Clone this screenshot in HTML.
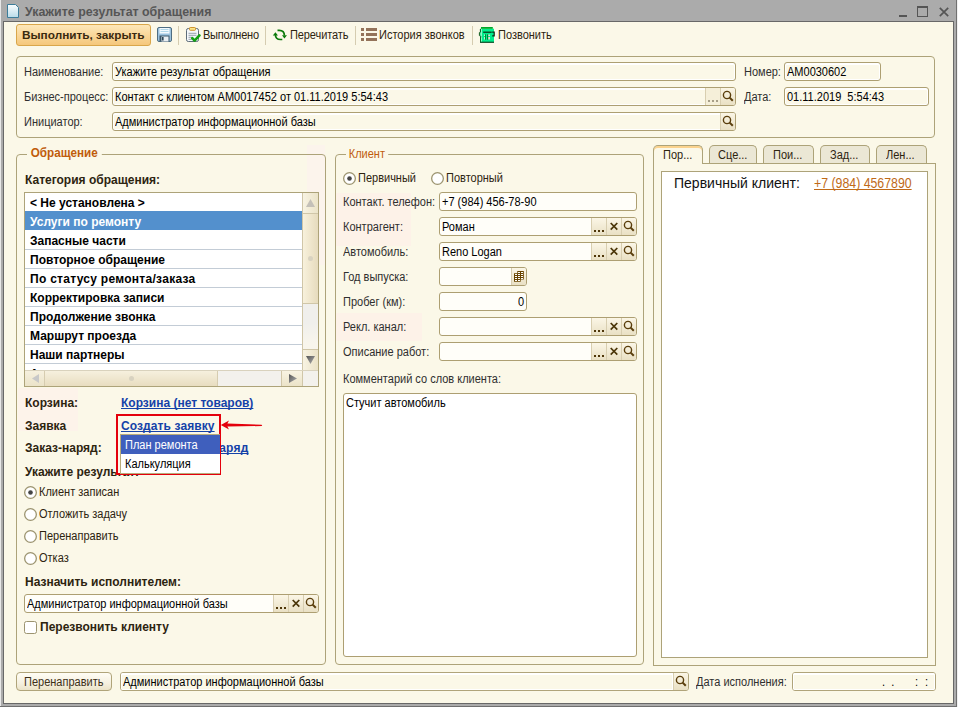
<!DOCTYPE html>
<html><head><meta charset="utf-8">
<style>
*{box-sizing:border-box;margin:0;padding:0}
html,body{width:958px;height:707px;overflow:hidden}
body{position:relative;background:#ababab;font-family:"Liberation Sans",sans-serif;font-size:11px;color:#2b2b2b}
.a{position:absolute}
.t{position:absolute;white-space:nowrap;line-height:13px;font-size:12px;transform:scaleX(.917);transform-origin:0 0}
.t.b{transform:none}
.content{position:absolute;left:4px;top:22px;width:949px;height:681px;background:#fbf8e8}
.grp{position:absolute;border:1px solid #ada379;border-radius:4px}
.inp{position:absolute;height:19px;border:1px solid #ad9f72;border-radius:3px;background:#fffef9;overflow:hidden}
.inp .v{position:absolute;left:2px;top:3px;white-space:nowrap;color:#000;line-height:13px;font-size:12px;transform:scaleX(.917);transform-origin:0 0}
.ro{background:#fbf8e8;box-shadow:inset 0 0 0 1px #fff,inset 0 1px 0 1px #fff}
.btn{position:absolute;top:0;bottom:0;width:15px;border-left:1px solid #d8ceb0;background:linear-gradient(#fbf6e6,#e9e0c4)}
.lbl{position:absolute;white-space:nowrap;color:#2f2f2f;line-height:13px;font-size:12px;transform:scaleX(.917);transform-origin:0 0}
.b{font-weight:bold}
.gt{position:absolute;background:#fbf8e8;padding:0 3px;color:#c05c0c;white-space:nowrap;line-height:13px;font-size:12px;transform:scaleX(.917);transform-origin:0 0}
.gt.b{transform:none}
.sep{position:absolute;top:28px;width:1px;height:16px;background:#d5ccb0}
</style></head><body>
<svg width="0" height="0" style="position:absolute"><defs><linearGradient id="ga" x1="0" y1="0" x2="1" y2="1"><stop offset="0" stop-color="#555"/><stop offset="1" stop-color="#b0b0b0"/></linearGradient><linearGradient id="gb" x1="0" y1="0" x2="1" y2="1"><stop offset="0" stop-color="#555"/><stop offset="1" stop-color="#b0b0b0"/></linearGradient></defs></svg>
<!-- window frame -->
<div class="a" style="left:0;top:0;width:1px;height:707px;background:#e8e8e8"></div>
<div class="a" style="left:3px;top:21px;width:951px;height:683px;background:#686868"></div>
<div class="a" style="left:956px;top:0;width:1px;height:707px;background:#707070"></div>
<div class="a" style="left:957px;top:0;width:1px;height:707px;background:#f0f0f0"></div>
<div class="a" style="left:0;top:706px;width:957px;height:1px;background:#707070"></div>
<div class="content"></div>
<!-- title -->
<svg class="a" style="left:7px;top:4px" width="12" height="14" viewBox="0 0 12 14"><defs><linearGradient id="gd" x1="0" y1="0" x2="0" y2="1"><stop offset="0" stop-color="#fafdfe"/><stop offset="1" stop-color="#b9dcea"/></linearGradient></defs><path d="M0.5 0.5H8.5L11.5 3.5V13.5H0.5Z" fill="url(#gd)" stroke="#3d7d9a"/></svg>
<div class="t b" style="left:25px;top:5px;font-size:12.4px;line-height:15px;color:#565656">Укажите результат обращения</div>
<div class="a" style="left:899px;top:15px;width:8px;height:2px;background:#555"></div>
<div class="a" style="left:917px;top:6px;width:11px;height:11px;border:1px solid #555;border-top-width:2px"></div>
<svg class="a" style="left:939px;top:7px" width="10" height="10" viewBox="0 0 10 10"><path d="M0.8 0.8L9.2 9.2M9.2 0.8L0.8 9.2" stroke="#555" stroke-width="1.7"/></svg>

<!-- toolbar -->
<div class="a" style="left:16px;top:24px;width:135px;height:22px;border:1px solid #d9a64a;border-radius:3px;background:linear-gradient(#fde7b9,#f5c77b)"></div>
<div class="t b" style="left:22px;top:29px;font-size:11.8px;color:#3a2a10">Выполнить, закрыть</div>


<!-- save icon -->
<svg class="a" style="left:157px;top:27px" width="15" height="15" viewBox="0 0 15 15">
<rect x="0.5" y="0.5" width="14" height="14" rx="1.5" fill="#9cc3df" stroke="#4e6d82"/>
<rect x="2.5" y="1" width="10" height="5.5" fill="#f4fafd"/>
<path d="M3.5 2.5H11.5M3.5 4.5H11.5" stroke="#a9d3e6" stroke-width="0.9"/>
<rect x="2.5" y="8.5" width="10" height="6" fill="#3d596b"/>
<rect x="4.5" y="9.5" width="7" height="5" fill="#e9eef2"/>
<rect x="5" y="10" width="1.6" height="3.5" fill="#2e4757"/>
</svg>
<div class="sep" style="left:178px;top:26px;height:19px"></div>
<!-- clipboard icon -->
<svg class="a" style="left:186px;top:27px" width="15" height="16" viewBox="0 0 15 16">
<rect x="0.5" y="1.5" width="12" height="13" rx="1.8" fill="#f3f7fa" stroke="#5d6c78"/>
<rect x="3.5" y="0.5" width="6" height="2.8" rx="0.8" fill="#fbe58a" stroke="#c98a1e" stroke-width="0.9"/>
<path d="M2.5 6.3H10.5M2.5 8.3H10.5M2.5 10.3H6.5M2.5 12.3H6" stroke="#7d8c99" stroke-width="0.8"/>
<path d="M6.3 11.2L8.6 13.6L13.4 8.4" stroke="#12a012" stroke-width="2.6" fill="none" stroke-linecap="round" stroke-linejoin="round"/>
</svg>
<div class="t" style="left:203px;top:29px;color:#2d2410;letter-spacing:-0.25px">Выполнено</div>
<div class="sep" style="left:265px;top:26px;height:19px"></div>
<!-- refresh icon -->
<svg class="a" style="left:272px;top:29px" width="16" height="12" viewBox="0 0 16 12">
<path d="M5.5 1.3H7.2Q12.4 1.3 12.4 6.6" stroke="#0b7a0b" stroke-width="1.7" fill="none"/>
<path d="M10 6.2H15L12.4 9.4Z" fill="#0b7a0b"/>
<path d="M10.3 10.5H8.6Q3.4 10.5 3.4 5.6" stroke="#0b7a0b" stroke-width="1.7" fill="none"/>
<path d="M0.8 6.4H6L3.4 3.2Z" fill="#0b7a0b"/>
</svg>
<div class="t" style="left:290px;top:29px;color:#2d2410;letter-spacing:-0.1px">Перечитать</div>
<div class="sep" style="left:355px;top:26px;height:19px"></div>
<!-- list icon -->
<svg class="a" style="left:361px;top:28px" width="16" height="13" viewBox="0 0 16 13">
<g fill="#94735a"><rect x="0" y="0" width="3" height="3"/><rect x="0" y="5" width="3" height="3"/><rect x="0" y="10" width="3" height="3"/>
<rect x="5" y="0" width="11" height="3"/><rect x="5" y="5" width="11" height="3"/><rect x="5" y="10" width="11" height="3"/></g>
</svg>
<div class="t" style="left:379px;top:29px;color:#2d2410">История звонков</div>
<div class="sep" style="left:472px;top:26px;height:19px"></div>
<!-- phone icon -->
<svg class="a" style="left:478px;top:26px" width="18" height="18" viewBox="0 0 18 18">
<rect x="2" y="2.7" width="14" height="13.8" fill="#00ee8c"/>
<rect x="3" y="1" width="11.8" height="1.8" fill="#00a828"/>
<rect x="2" y="15.7" width="14" height="1.1" fill="#0a3a1a"/>
<rect x="2.7" y="3" width="0.9" height="12.5" fill="#e8fff0"/>
<path d="M2.4 3V6.2L1.4 6.6V9.6L3.4 10.8" stroke="#0a5a1a" stroke-width="1" fill="none"/>
<rect x="2" y="11" width="0.9" height="5" fill="#0a5a1a"/>
<rect x="5.2" y="5.6" width="8.5" height="1.2" fill="#0a2a10"/>
<path d="M14.2 6.2H16.2V9.8H14.2" stroke="#0a2a10" stroke-width="1.2" fill="none"/>
<rect x="6.9" y="8.3" width="0.9" height="5.4" fill="#006a20"/>
<rect x="9.2" y="8.3" width="0.9" height="5.4" fill="#006a20"/>
<rect x="6" y="8.5" width="0.8" height="1.5" fill="#e0f5e8"/><rect x="6" y="11" width="0.8" height="2.5" fill="#e0f5e8"/>
<rect x="10.3" y="8.5" width="1.7" height="1.5" fill="#e8d8d0"/><rect x="10.3" y="11" width="1.7" height="2.5" fill="#e8d8d0"/>
</svg>
<div class="t" style="left:498px;top:29px;color:#2d2410">Позвонить</div>

<!-- top group -->
<div class="grp" style="left:16px;top:56px;width:919px;height:82px"></div>
<div class="lbl" style="left:24px;top:66px">Наименование:</div>
<div class="inp ro" style="left:112px;top:62px;width:624px"><div class="v">Укажите результат обращения</div></div>
<div class="lbl" style="left:744px;top:66px">Номер:</div>
<div class="inp ro" style="left:784px;top:62px;width:97px"><div class="v">AM0030602</div></div>
<div class="lbl" style="left:24px;top:91px">Бизнес-процесс:</div>
<div class="inp ro" style="left:112px;top:87px;width:624px"><div class="v">Контакт с клиентом AM0017452 от 01.11.2019 5:54:43</div>
 <div class="btn dots" style="right:15px;background:#f5efd9"><svg width="15" height="17"><g fill="#a89f88"><rect x="2" y="12" width="2" height="2"/><rect x="6" y="12" width="2" height="2"/><rect x="10" y="12" width="2" height="2"/></g></svg></div><div class="btn srch" style="right:0"><svg width="15" height="17"><circle cx="6" cy="7" r="3.6" fill="none" stroke="#5a3e0c" stroke-width="1.4"/><path d="M8.6 9.6L11.8 12.8" stroke="#5a3e0c" stroke-width="2"/></svg></div></div>
<div class="lbl" style="left:744px;top:91px">Дата:</div>
<div class="inp ro" style="left:784px;top:87px;width:145px"><div class="v">01.11.2019&nbsp; 5:54:43</div></div>
<div class="lbl" style="left:24px;top:116px">Инициатор:</div>
<div class="inp ro" style="left:112px;top:112px;width:624px"><div class="v">Администратор информационной базы</div>
 <div class="btn srch" style="right:0"><svg width="15" height="17"><circle cx="6" cy="7" r="3.6" fill="none" stroke="#5a3e0c" stroke-width="1.4"/><path d="M8.6 9.6L11.8 12.8" stroke="#5a3e0c" stroke-width="2"/></svg></div></div>


<!-- Obrashchenie group -->
<div class="a" style="left:307px;top:145px;width:18px;height:120px;background:#fcf4ec"></div>

<div class="grp" style="left:16px;top:154px;width:310px;height:511px"></div>
<div class="gt b" style="left:27px;top:146px;font-size:12.5px;line-height:14px;transform:scaleX(.935);padding:0 4px 0 4px">Обращение</div>
<div class="t b" style="left:25px;top:174px;font-size:12px;color:#2d2410">Категория обращения:</div>
<div class="a" style="left:24px;top:192px;width:295px;height:195px;border:1px solid #ada379;background:#fff;overflow:hidden">
 <div class="a" style="left:0;top:0;width:277px;height:177px;overflow:hidden"><div class="t b" style="left:5px;top:4px;font-size:12px;color:#000">&lt; Не установлена &gt;</div><div class="a" style="left:0;top:18px;width:277px;height:19px;background:#5390cd"></div><div class="t b" style="left:5px;top:23px;font-size:12px;color:#fff">Услуги по ремонту</div><div class="t b" style="left:5px;top:42px;font-size:12px;color:#000">Запасные части</div><div class="a" style="left:0;top:56px;width:277px;height:1px;background:#c3ccd6"></div><div class="t b" style="left:5px;top:61px;font-size:12px;color:#000">Повторное обращение</div><div class="a" style="left:0;top:75px;width:277px;height:1px;background:#c3ccd6"></div><div class="t b" style="left:5px;top:80px;font-size:12px;color:#000;letter-spacing:0.28px">По статусу ремонта/заказа</div><div class="a" style="left:0;top:94px;width:277px;height:1px;background:#c3ccd6"></div><div class="t b" style="left:5px;top:99px;font-size:12px;color:#000">Корректировка записи</div><div class="a" style="left:0;top:113px;width:277px;height:1px;background:#c3ccd6"></div><div class="t b" style="left:5px;top:118px;font-size:12px;color:#000">Продолжение звонка</div><div class="a" style="left:0;top:132px;width:277px;height:1px;background:#c3ccd6"></div><div class="t b" style="left:5px;top:137px;font-size:12px;color:#000">Маршрут проезда</div><div class="a" style="left:0;top:151px;width:277px;height:1px;background:#c3ccd6"></div><div class="t b" style="left:5px;top:156px;font-size:12px;color:#000">Наши партнеры</div><div class="a" style="left:0;top:170px;width:277px;height:1px;background:#c3ccd6"></div>
 <div class="t b" style="left:5px;top:175px;font-size:12px;color:#000">Ауто</div></div>
 <!-- vscroll -->
 <div class="a" style="left:277px;top:0;width:16px;height:177px;background:linear-gradient(#f0efec 0,#f0efec 130px,#f8f5ec 150px);border-left:1px solid #d0c6a8"></div>
 <div class="a" style="left:278px;top:0;width:15px;height:21px;background:linear-gradient(90deg,#f8f3e2,#ebe3c8);border-bottom:1px solid #d0c6a8"></div>
 <svg class="a" style="left:281px;top:6px" width="9" height="8"><path d="M4.5 0L9 8H0Z" fill="#c4c0b8"/></svg>
 <div class="a" style="left:278px;top:21px;width:15px;height:90px;background:linear-gradient(90deg,#f8f1dc,#e6dbbd);border-bottom:1px solid #d0c6a8"></div>
 <div class="a" style="left:283px;top:63px;width:5px;height:5px;border-radius:50%;background:#d8d2c0"></div>
 <div class="a" style="left:278px;top:156px;width:15px;height:21px;background:linear-gradient(90deg,#f8f3e2,#ebe3c8);border-top:1px solid #d0c6a8"></div>
 <svg class="a" style="left:281px;top:163px" width="9" height="8"><path d="M0 0H9L4.5 8Z" fill="url(#ga)"/></svg>
 <!-- hscroll -->
 <div class="a" style="left:0;top:177px;width:293px;height:16px;background:#f3f1ec;border-top:1px solid #d9d2bd"></div>
 <div class="a" style="left:0;top:178px;width:20px;height:15px;background:linear-gradient(#f6f0de,#ebe3c9);border-right:1px solid #d6ccb0"></div>
 <svg class="a" style="left:7px;top:181px" width="7" height="9"><path d="M7 0V9L0 4.5Z" fill="#c8c8c8"/></svg>
 <div class="a" style="left:20px;top:178px;width:173px;height:15px;background:linear-gradient(#f6f0de,#e8ddc0);border-right:1px solid #d6ccb0"></div>
 <div class="a" style="left:104px;top:183px;width:5px;height:5px;border-radius:50%;background:#d8d2c0"></div>
 <div class="a" style="left:256px;top:178px;width:22px;height:15px;background:linear-gradient(#f8f3e2,#ebe3c8);border-left:1px solid #d0c6a8;border-right:1px solid #d0c6a8"></div>
 <svg class="a" style="left:264px;top:181px" width="8" height="9"><path d="M0 0V9L8 4.5Z" fill="url(#gb)"/></svg>
</div>

<div class="a" style="left:18px;top:388px;width:60px;height:43px;background:#fdf3ea"></div>
<div class="t b" style="left:25px;top:397px;font-size:12px;color:#2d2410">Корзина:</div>
<div class="t b" style="left:121px;top:397px;font-size:12px;color:#1442a8;text-decoration:underline;text-decoration-skip-ink:none">Корзина (нет товаров)</div>
<div class="t b" style="left:25px;top:420px;font-size:12px;color:#2d2410">Заявка</div>
<div class="t b" style="left:25px;top:442px;font-size:12px;color:#2d2410">Заказ-наряд:</div>
<div class="t b" style="left:121px;top:442px;font-size:12px;color:#1442a8;text-decoration:underline;text-decoration-skip-ink:none;letter-spacing:0.2px">Создать заказ-наряд</div>
<div class="t b" style="left:25px;top:466px;font-size:12px;color:#2d2410">Укажите результат:</div>

<!-- popup -->
<div class="a" style="left:116px;top:414px;width:105px;height:61px;border:2px solid #e4000c;background:#fbf8e8"></div>
<div class="t b" style="left:121px;top:420px;font-size:12px;color:#1442a8;text-decoration:underline;text-decoration-skip-ink:none;letter-spacing:0.1px">Создать заявку</div>
<div class="a" style="left:120px;top:434px;width:100px;height:40px;background:#fff;border-top:1px solid #b9ab7a;border-bottom:1px solid #b9ab7a;border-left:1px solid #b9ab7a"></div>
<div class="a" style="left:121px;top:435px;width:99px;height:19px;background:#3f5fbd"></div>
<div class="t" style="left:125px;top:439px;color:#fff">План ремонта</div>
<div class="t" style="left:125px;top:458px;color:#000">Калькуляция</div>
<svg class="a" style="left:218px;top:416px" width="46" height="18" viewBox="0 0 46 18"><path d="M2.8 9L11 4.6L9.4 7.6L43.6 8.7L44.2 10L9.4 10.6L11 13.6Z" fill="#e4000c"/></svg>
<svg class="a" style="left:24px;top:486px" width="13" height="13"><circle cx="6.5" cy="6.5" r="5.85" fill="#fff" stroke="#9c9470" stroke-width="1.3"/><circle cx="6.5" cy="6.5" r="2.3" fill="#444"/></svg><div class="t" style="left:39px;top:486px;color:#2d2410">Клиент записан</div>
<svg class="a" style="left:24px;top:508px" width="13" height="13"><circle cx="6.5" cy="6.5" r="5.85" fill="#fff" stroke="#9c9470" stroke-width="1.3"/></svg><div class="t" style="left:39px;top:508px;color:#2d2410">Отложить задачу</div>
<svg class="a" style="left:24px;top:530px" width="13" height="13"><circle cx="6.5" cy="6.5" r="5.85" fill="#fff" stroke="#9c9470" stroke-width="1.3"/></svg><div class="t" style="left:39px;top:530px;color:#2d2410">Перенаправить</div>
<svg class="a" style="left:24px;top:552px" width="13" height="13"><circle cx="6.5" cy="6.5" r="5.85" fill="#fff" stroke="#9c9470" stroke-width="1.3"/></svg><div class="t" style="left:39px;top:552px;color:#2d2410">Отказ</div>

<div class="t b" style="left:25px;top:576px;font-size:12px;color:#2d2410">Назначить исполнителем:</div>
<div class="inp" style="left:24px;top:594px;width:295px"><div class="v">Администратор информационной базы</div>
 <div class="btn dots" style="right:30px"><svg width="15" height="17"><g fill="#4f3608"><rect x="2" y="12" width="2" height="2"/><rect x="6" y="12" width="2" height="2"/><rect x="10" y="12" width="2" height="2"/></g></svg></div><div class="btn clr" style="right:15px"><svg width="15" height="17"><path d="M3.7 5L10.3 11.6M10.3 5L3.7 11.6" stroke="#4a3508" stroke-width="1.7"/></svg></div><div class="btn srch" style="right:0"><svg width="15" height="17"><circle cx="6" cy="7" r="3.6" fill="none" stroke="#5a3e0c" stroke-width="1.4"/><path d="M8.6 9.6L11.8 12.8" stroke="#5a3e0c" stroke-width="2"/></svg></div></div>
<div class="a" style="left:24px;top:621px;width:13px;height:13px;border:1px solid #9c9470;border-radius:2.5px;background:#fff"></div>
<div class="t b" style="left:40px;top:621px;font-size:12px;color:#2d2410">Перезвонить клиенту</div>


<!-- Klient group -->
<div class="grp" style="left:335px;top:154px;width:309px;height:511px"></div>
<div class="gt" style="left:346px;top:148px">Клиент</div>
<svg class="a" style="left:343px;top:172px" width="13" height="13"><circle cx="6.5" cy="6.5" r="5.85" fill="#fff" stroke="#9c9470" stroke-width="1.3"/><circle cx="6.5" cy="6.5" r="2.3" fill="#444"/></svg>
<div class="t" style="left:358px;top:172px;color:#2d2410">Первичный</div>
<svg class="a" style="left:431px;top:172px" width="13" height="13"><circle cx="6.5" cy="6.5" r="5.85" fill="#fff" stroke="#9c9470" stroke-width="1.3"/></svg>
<div class="t" style="left:446px;top:172px;color:#2d2410">Повторный</div>
<div class="a" style="left:336px;top:193px;width:75px;height:53px;background:#fdf2e8"></div>
<div class="a" style="left:336px;top:313px;width:86px;height:28px;background:#fdf2e8"></div>
<div class="lbl" style="left:343px;top:196px">Контакт. телефон:</div>
<div class="inp" style="left:439px;top:192px;width:198px"><div class="v">+7 (984) 456-78-90</div></div>
<div class="lbl" style="left:343px;top:221px">Контрагент:</div>
<div class="inp" style="left:439px;top:217px;width:198px"><div class="v">Роман</div>
 <div class="btn dots" style="right:30px"><svg width="15" height="17"><g fill="#4f3608"><rect x="2" y="12" width="2" height="2"/><rect x="6" y="12" width="2" height="2"/><rect x="10" y="12" width="2" height="2"/></g></svg></div><div class="btn clr" style="right:15px"><svg width="15" height="17"><path d="M3.7 5L10.3 11.6M10.3 5L3.7 11.6" stroke="#4a3508" stroke-width="1.7"/></svg></div><div class="btn srch" style="right:0"><svg width="15" height="17"><circle cx="6" cy="7" r="3.6" fill="none" stroke="#5a3e0c" stroke-width="1.4"/><path d="M8.6 9.6L11.8 12.8" stroke="#5a3e0c" stroke-width="2"/></svg></div></div>
<div class="lbl" style="left:343px;top:246px">Автомобиль:</div>
<div class="inp" style="left:439px;top:242px;width:198px"><div class="v">Reno Logan</div>
 <div class="btn dots" style="right:30px"><svg width="15" height="17"><g fill="#4f3608"><rect x="2" y="12" width="2" height="2"/><rect x="6" y="12" width="2" height="2"/><rect x="10" y="12" width="2" height="2"/></g></svg></div><div class="btn clr" style="right:15px"><svg width="15" height="17"><path d="M3.7 5L10.3 11.6M10.3 5L3.7 11.6" stroke="#4a3508" stroke-width="1.7"/></svg></div><div class="btn srch" style="right:0"><svg width="15" height="17"><circle cx="6" cy="7" r="3.6" fill="none" stroke="#5a3e0c" stroke-width="1.4"/><path d="M8.6 9.6L11.8 12.8" stroke="#5a3e0c" stroke-width="2"/></svg></div></div>
<div class="lbl" style="left:343px;top:271px">Год выпуска:</div>
<div class="inp" style="left:439px;top:267px;width:88px"><div class="btn cal" style="right:0"><svg width="15" height="17" style="margin-left:-1px"><path d="M6.3 3H12.8V11.6H9.7V13.8H3V5.2H6.3Z" fill="#6a4500"/><rect x="7" y="4" width="2" height="1" fill="#fff"/><rect x="10" y="4" width="2" height="1" fill="#fff"/><rect x="4" y="6" width="2" height="1" fill="#fff"/><rect x="7" y="6" width="2" height="1" fill="#fff"/><rect x="10" y="6" width="2" height="1" fill="#fff"/><rect x="4" y="8" width="2" height="1" fill="#fff"/><rect x="7" y="8" width="2" height="1" fill="#fff"/><rect x="10" y="8" width="2" height="1" fill="#fff"/><rect x="4" y="10" width="2" height="1" fill="#fff"/><rect x="7" y="10" width="2" height="1" fill="#fff"/><rect x="10" y="10" width="2" height="1" fill="#fff"/><rect x="4" y="12" width="2" height="1" fill="#fff"/><rect x="7" y="12" width="2" height="1" fill="#fff"/></svg></div></div>
<div class="lbl" style="left:343px;top:296px">Пробег (км):</div>
<div class="inp" style="left:439px;top:292px;width:88px"><div class="v" style="left:auto;right:1px">0</div></div>
<div class="lbl" style="left:343px;top:321px">Рекл. канал:</div>
<div class="inp" style="left:439px;top:317px;width:198px">
 <div class="btn dots" style="right:30px"><svg width="15" height="17"><g fill="#4f3608"><rect x="2" y="12" width="2" height="2"/><rect x="6" y="12" width="2" height="2"/><rect x="10" y="12" width="2" height="2"/></g></svg></div><div class="btn clr" style="right:15px"><svg width="15" height="17"><path d="M3.7 5L10.3 11.6M10.3 5L3.7 11.6" stroke="#4a3508" stroke-width="1.7"/></svg></div><div class="btn srch" style="right:0"><svg width="15" height="17"><circle cx="6" cy="7" r="3.6" fill="none" stroke="#5a3e0c" stroke-width="1.4"/><path d="M8.6 9.6L11.8 12.8" stroke="#5a3e0c" stroke-width="2"/></svg></div></div>
<div class="lbl" style="left:343px;top:346px">Описание работ:</div>
<div class="inp" style="left:439px;top:342px;width:198px">
 <div class="btn dots" style="right:30px"><svg width="15" height="17"><g fill="#4f3608"><rect x="2" y="12" width="2" height="2"/><rect x="6" y="12" width="2" height="2"/><rect x="10" y="12" width="2" height="2"/></g></svg></div><div class="btn clr" style="right:15px"><svg width="15" height="17"><path d="M3.7 5L10.3 11.6M10.3 5L3.7 11.6" stroke="#4a3508" stroke-width="1.7"/></svg></div><div class="btn srch" style="right:0"><svg width="15" height="17"><circle cx="6" cy="7" r="3.6" fill="none" stroke="#5a3e0c" stroke-width="1.4"/><path d="M8.6 9.6L11.8 12.8" stroke="#5a3e0c" stroke-width="2"/></svg></div></div>
<div class="lbl" style="left:343px;top:373px">Комментарий со слов клиента:</div>
<div class="inp" style="left:343px;top:393px;width:294px;height:264px;background:#fff"><div class="v" style="top:3px">Стучит автомобиль</div></div>

<!-- right tab panel -->
<div class="a" style="left:653px;top:163px;width:283px;height:503px;border:1px solid #ada379"></div>
<div class="a" style="left:661px;top:171px;width:267px;height:487px;border:1px solid #ada379;background:#fff"></div>
<div class="a" style="left:653px;top:145px;width:50px;height:19px;border:1px solid #ada379;border-bottom:0;border-radius:5px 5px 0 0;background:#fbf8e8;box-shadow:inset 0 2px 0 #fbd38e"></div>
<div class="t" style="left:663px;top:149px;color:#2d2410">Пор...</div>
<div class="a" style="left:709px;top:145px;width:48px;height:18px;border:1px solid #ada379;border-bottom:0;border-radius:5px 5px 0 0;background:#ebe7d5"></div>
<div class="t" style="left:718px;top:149px;color:#2d2410">Сце...</div>
<div class="a" style="left:763px;top:145px;width:51px;height:18px;border:1px solid #ada379;border-bottom:0;border-radius:5px 5px 0 0;background:#ebe7d5"></div>
<div class="t" style="left:773px;top:149px;color:#2d2410">Пои...</div>
<div class="a" style="left:820px;top:145px;width:50px;height:18px;border:1px solid #ada379;border-bottom:0;border-radius:5px 5px 0 0;background:#ebe7d5"></div>
<div class="t" style="left:830px;top:149px;color:#2d2410">Зад...</div>
<div class="a" style="left:876px;top:145px;width:51px;height:18px;border:1px solid #ada379;border-bottom:0;border-radius:5px 5px 0 0;background:#ebe7d5"></div>
<div class="t" style="left:886px;top:149px;color:#2d2410">Лен...</div>
<div class="t" style="left:674px;top:175px;font-size:14px;line-height:16px;color:#111;transform:none">Первичный клиент:</div>
<div class="t" style="left:814px;top:175px;font-size:14px;line-height:16px;color:#c06a18;text-decoration:underline;text-decoration-skip-ink:none;transform:scaleX(.88)">+7 (984) 4567890</div>

<!-- bottom row -->
<div class="a" style="left:16px;top:672px;width:96px;height:19px;border:1px solid #b0a47a;border-radius:4px;background:linear-gradient(#fffdf5,#f5f0e0 60%,#ebe3c8)"></div>
<div class="t" style="left:24px;top:676px;color:#3d3018">Перенаправить</div>
<div class="inp" style="left:120px;top:672px;width:569px;background:#fbf8e8;border-color:#b0a47a">
 <div class="a" style="left:0;top:0;right:15px;bottom:0;border:1px solid #fff;border-top-width:2px;border-right-width:1px"></div>
 <div class="v" style="left:2px;top:3px">Администратор информационной базы</div><div class="btn srch" style="right:0"><svg width="15" height="17"><circle cx="6" cy="7" r="3.6" fill="none" stroke="#5a3e0c" stroke-width="1.4"/><path d="M8.6 9.6L11.8 12.8" stroke="#5a3e0c" stroke-width="2"/></svg></div></div>
<div class="lbl" style="left:696px;top:676px">Дата исполнения:</div>
<div class="inp" style="left:792px;top:672px;width:144px;background:#fbf8e8;border-color:#b0a47a">
 <div class="a" style="left:0;top:0;right:0;bottom:0;border:1px solid #fff;border-top-width:2px"></div>
 <div class="v" style="left:89px;top:3px;letter-spacing:0">.&nbsp;&nbsp;.</div>
 <div class="v" style="left:122px;top:3px">:</div><div class="v" style="left:132px;top:3px">:</div></div>

</body></html>
